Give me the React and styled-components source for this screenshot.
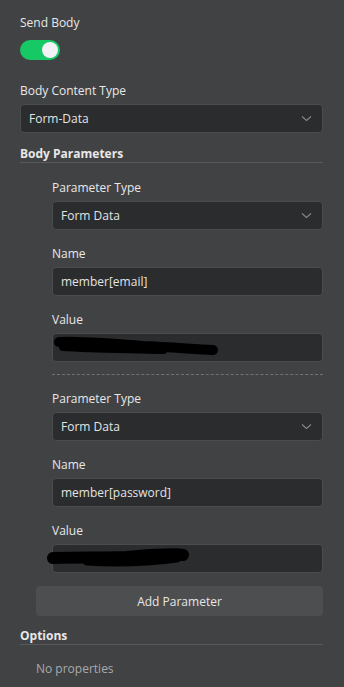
import React from "react";
import styled, { createGlobalStyle } from "styled-components";

const GlobalStyle = createGlobalStyle`
  html, body {
    margin: 0;
    padding: 0;
    background-color: #414244;
  }
  body {
    font-family: "Open Sans", "Noto Sans", sans-serif;
    font-size: 12px;
    color: #e6e6e6;
  }
`;

const Panel = styled.div`
  width: 344px;
  min-height: 687px;
  box-sizing: border-box;
  padding: 14px 21px 0 20px;
  background-color: #414244;
`;

const Field = styled.div`
  display: flex;
  flex-direction: column;
  margin-bottom: ${(p) => p.$spacing ?? 15}px;
`;

const Label = styled.label`
  font-size: 12px;
  line-height: 18px;
  font-weight: 500;
  color: #e8e8e8;
  margin-bottom: ${(p) => p.$gap ?? 4}px;
`;

const Toggle = styled.div`
  width: 40px;
  height: 20px;
  border-radius: 10px;
  background-color: #17c964;
  position: relative;

  &::after {
    content: "";
    position: absolute;
    top: 2px;
    right: 2px;
    width: 16px;
    height: 16px;
    border-radius: 50%;
    background-color: #f1f1f6;
  }
`;

const Control = styled.div`
  position: relative;
  height: 29px;
  box-sizing: border-box;
  display: flex;
  align-items: center;
  justify-content: space-between;
  padding: 0 10px 0 8px;
  background-color: #2b2c2d;
  border: 1px solid #4b4c4e;
  border-radius: 4px;
  font-size: 12px;
  color: #e4e4e4;
`;

const Chevron = () => (
  <svg width="11" height="7" viewBox="0 0 11 7">
    <path d="M1 1.5 L5.5 5.5 L10 1.5" fill="none" stroke="#86878a" strokeWidth="1.1" />
  </svg>
);

const Section = styled.div`
  font-size: 12px;
  line-height: 16px;
  font-weight: 700;
  color: #e8e8e8;
  border-bottom: 1px solid #58595b;
  margin-top: ${(p) => p.$before ?? 0}px;
  margin-bottom: ${(p) => p.$after ?? 16}px;
`;

const Params = styled.div`
  padding-left: 32px;
`;

const Divider = styled.div`
  border-top: 1px dashed #707173;
  margin: 12px 0 15px;
`;

const Scribble = styled.svg`
  position: absolute;
  pointer-events: none;
`;

const AddButton = styled.button`
  display: block;
  width: calc(100% - 16px);
  margin: 13px 0 0 16px;
  height: 30px;
  border: none;
  border-radius: 4px;
  background-color: #4d4e50;
  color: #e6e6e6;
  font-family: "Open Sans", "Noto Sans", sans-serif;
  font-size: 12px;
`;

const Empty = styled.div`
  padding-left: 16px;
  margin-top: 16px;
  font-size: 12px;
  line-height: 16px;
  color: #a9a9aa;
`;

const SelectField = ({ label, value }) => (
  <Field>
    <Label>{label}</Label>
    <Control>
      <span>{value}</span>
      <Chevron />
    </Control>
  </Field>
);

const params = [
  {
    name: "member[email]",
    scribble: (
      <Scribble
        width="170"
        height="24"
        viewBox="0 0 170 24"
        style={{ left: 0, top: 1 }}
      >
        <path
          d="M6 7 C30 6 60 9 90 11 C115 12 140 14 160 15"
          fill="none"
          stroke="#000"
          strokeWidth="10"
          strokeLinecap="round"
        />
        <path
          d="M10 12 C40 14 80 14 110 15"
          fill="none"
          stroke="#000"
          strokeWidth="8"
          strokeLinecap="round"
        />
      </Scribble>
    ),
  },
  {
    name: "member[password]",
    scribble: (
      <Scribble
        width="150"
        height="26"
        viewBox="0 0 150 26"
        style={{ left: -6, top: 1 }}
      >
        <path
          d="M6 12 C30 11 55 12 80 11 C105 9 125 7 136 9"
          fill="none"
          stroke="#000"
          strokeWidth="12"
          strokeLinecap="round"
        />
        <path
          d="M40 15 C70 17 100 16 130 12"
          fill="none"
          stroke="#000"
          strokeWidth="9"
          strokeLinecap="round"
        />
      </Scribble>
    ),
  },
];

export default function App() {
  return (
    <>
      <GlobalStyle />
      <Panel>
        <Field $spacing={22}>
          <Label $gap={8}>Send Body</Label>
          <Toggle />
        </Field>

        <Field $spacing={13}>
          <Label>Body Content Type</Label>
          <Control>
            <span>Form-Data</span>
            <Chevron />
          </Control>
        </Field>

        <Section>Body Parameters</Section>

        <Params>
          {params.map((p, i) => (
            <React.Fragment key={p.name}>
              {i > 0 && <Divider />}
              <SelectField label="Parameter Type" value="Form Data" />
              <Field>
                <Label>Name</Label>
                <Control>
                  <span>{p.name}</span>
                </Control>
              </Field>
              <Field $spacing={0}>
                <Label>Value</Label>
                <Control>{p.scribble}</Control>
              </Field>
            </React.Fragment>
          ))}
        </Params>

        <AddButton>Add Parameter</AddButton>

        <Section $before={12} $after={0}>
          Options
        </Section>
        <Empty>No properties</Empty>
      </Panel>
    </>
  );
}
